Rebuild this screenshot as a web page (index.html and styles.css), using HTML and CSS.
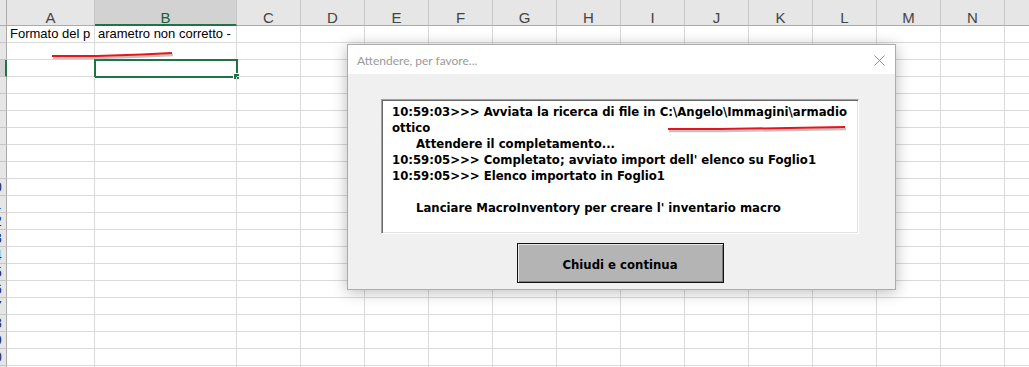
FILE: index.html
```html
<!DOCTYPE html>
<html lang="it">
<head>
  <meta charset="UTF-8">
  <title>Foglio1 - Attendere</title>
  <link rel="stylesheet" href="styles.css">
</head>
<body>

<div class="sheet" id="sheet"></div>

<div class="dialog">
  <div class="titlebar">
    <span class="title">Attendere, per favore...</span>
    <svg class="close" width="11" height="11" viewBox="0 0 11 11">
      <path d="M0.5 0.5 L10.5 10.5 M10.5 0.5 L0.5 10.5" stroke="#8c8c8c" stroke-width="1" fill="none"/>
    </svg>
  </div>
  <div class="dlg-body">
    <div class="log">
      <div class="line">10:59:03&gt;&gt;&gt; Avviata la ricerca di file in C:\Angelo\Immagini\armadio</div>
      <div class="line">ottico</div>
      <div class="line indent">Attendere il completamento...</div>
      <div class="line">10:59:05&gt;&gt;&gt; Completato; avviato import dell' elenco su Foglio1</div>
      <div class="line">10:59:05&gt;&gt;&gt; Elenco importato in Foglio1</div>
      <div class="line">&nbsp;</div>
      <div class="line indent">Lanciare MacroInventory per creare l' inventario macro</div>
    </div>
    <button class="btn">Chiudi e continua</button>
  </div>
</div>

<!-- hand drawn red marks over the screenshot -->
<svg class="marks" width="1029" height="367" viewBox="0 0 1029 367">
  <polyline points="53,58 98,58 143,56.5 173,55" stroke="#9a9a9a" stroke-width="2.5" fill="none" opacity="0.6"/>
  <polyline points="52,56 97,56 142,54.5 172,53" stroke="#e8141b" stroke-width="2" fill="none"/>
  <polyline points="669,131 720,131 790,130 846,129" stroke="#9a9a9a" stroke-width="2.5" fill="none" opacity="0.6"/>
  <polyline points="668,129 719,129 789,128 845,127" stroke="#e8141b" stroke-width="2" fill="none"/>
</svg>

<script>
  const sheet = document.getElementById('sheet');
  const letters = 'ABCDEFGHIJKLMNO'.split('');

  // column headers
  const corner = document.createElement('div');
  corner.className = 'head corner';
  sheet.appendChild(corner);
  letters.forEach(function (l) {
    const h = document.createElement('div');
    h.className = 'head' + (l === 'B' ? ' head-sel' : '');
    h.textContent = l;
    sheet.appendChild(h);
  });

  // rows
  for (let r = 1; r <= 21; r++) {
    const rh = document.createElement('div');
    rh.className = 'rowhead' + (r === 3 ? ' rowhead-sel' : '');
    const num = document.createElement('span');
    num.textContent = r;
    rh.appendChild(num);
    sheet.appendChild(rh);

    letters.forEach(function (l) {
      const c = document.createElement('div');
      c.className = 'cell';
      if (r === 1 && l === 'A') c.textContent = 'Formato del p';
      if (r === 1 && l === 'B') c.textContent = 'arametro non corretto -';
      if (r === 3 && l === 'B') {
        c.className += ' cell-sel';
        const handle = document.createElement('i');
        handle.className = 'handle';
        c.appendChild(handle);
      }
      sheet.appendChild(c);
    });
  }
</script>

</body>
</html>
```

FILE: styles.css
```css
body {
  margin: 0;
  background-color: #fff;
  overflow: hidden;
  width: 1029px;
  height: 367px;
  font-family: 'Liberation Sans', Arial, sans-serif;
}

/* spreadsheet */
.sheet {
  display: grid;
  grid-template-columns: 7px 88px 142px repeat(13, 64px);
  grid-template-rows: 26px;
  grid-auto-rows: 17px;
}

.head {
  box-sizing: border-box;
  background-color: #e6e6e6;
  border-right: 1px solid #c6c6c6;
  border-bottom: 1px solid #ababab;
  color: #444;
  font-size: 15px;
  line-height: 15px;
  padding-top: 10px;
  text-align: center;
}

.corner {
  border-right: 1px solid #ababab;
}

.head-sel {
  background-color: #d2d2d2;
  border-bottom: 2px solid #217346;
  color: #1d5d38;
}

.rowhead {
  box-sizing: border-box;
  background-color: #e6e6e6;
  border-right: 1px solid #ababab;
  border-bottom: 1px solid #c6c6c6;
  overflow: hidden;
}

.rowhead span {
  display: block;
  width: 24px;
  margin-left: -18px;
  text-align: center;
  font-size: 14px;
  line-height: 16px;
  color: #26265a;
}

.rowhead-sel {
  background-color: #d2d2d2;
  border-right: 2px solid #217346;
}

.cell {
  box-sizing: border-box;
  border-right: 1px solid #dadada;
  border-bottom: 1px solid #dadada;
  font-size: 13px;
  line-height: 16px;
  padding-left: 3px;
  white-space: nowrap;
  color: #000;
  position: relative;
}

.cell-sel {
  border: 2px solid #217346;
  margin: -1px 0 0 -1px;
  width: calc(100% + 2px);
  height: 19px;
}

.handle {
  position: absolute;
  right: -4px;
  bottom: -4px;
  width: 5px;
  height: 5px;
  background-color: #217346;
  border: 1px solid #fff;
}

/* dialog */
.dialog {
  position: absolute;
  left: 347px;
  top: 44px;
  width: 549px;
  height: 246px;
  box-sizing: border-box;
  border: 1px solid #acacac;
  background-color: #f0f0f0;
  box-shadow: 0 2px 14px rgba(0, 0, 0, 0.28);
}

.titlebar {
  height: 29px;
  background-color: #fff;
  display: flex;
  align-items: center;
  justify-content: space-between;
  padding: 0 10px 0 9px;
}

.title {
  font-family: Lato, 'Noto Sans', sans-serif;
  font-size: 12px;
  color: #9a9a9a;
  padding-top: 1px;
}

.close {
  margin-top: 1px;
}

.dlg-body {
  width: 478px;
  margin: 25px 0 0 33px;
  display: flex;
  flex-direction: column;
  align-items: center;
}

.log {
  box-sizing: border-box;
  width: 100%;
  height: 135px;
  background-color: #fff;
  border-top: 1px solid #a0a0a0;
  border-left: 1px solid #a0a0a0;
  border-right: 1px solid #fff;
  border-bottom: 1px solid #fff;
  box-shadow: inset 1px 1px 0 #696969, inset -1px -1px 0 #e3e3e3;
  padding: 4px 10px;
  font-family: 'DejaVu Sans Condensed', 'DejaVu Sans', sans-serif;
  font-weight: bold;
  font-size: 13px;
  line-height: 16px;
  color: #000;
}

.line {
  white-space: nowrap;
}

.indent {
  padding-left: 24px;
}

.btn {
  margin-top: 9px;
  width: 207px;
  height: 40px;
  background-color: #b4b4b4;
  border: 1px solid #111;
  box-shadow: inset 1px 1px 0 #e8e8e8, inset -1px -1px 0 #7a7a7a;
  font-family: 'DejaVu Sans Condensed', 'DejaVu Sans', sans-serif;
  font-weight: bold;
  font-size: 13px;
  color: #000;
  padding: 2px 0 0 0;
}

.marks {
  position: absolute;
  left: 0;
  top: 0;
  pointer-events: none;
}
```
